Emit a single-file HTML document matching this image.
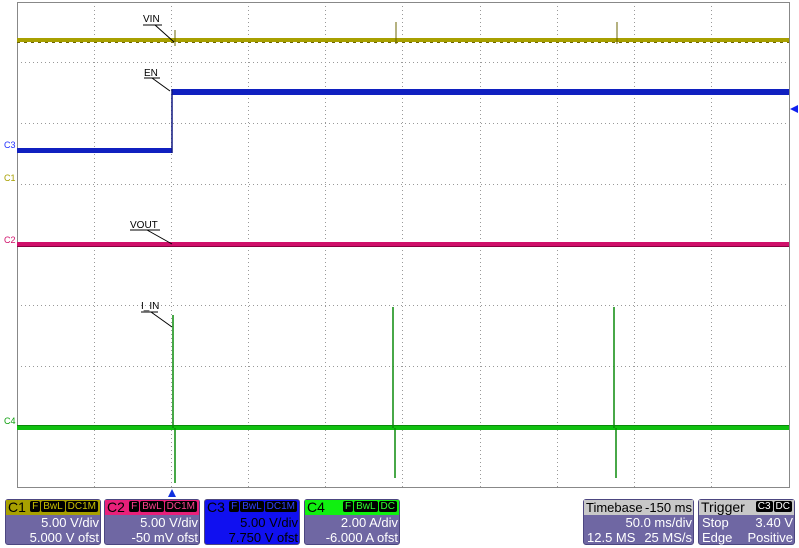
<!DOCTYPE html>
<html><head><meta charset="utf-8"><style>
body{margin:0;background:#fff;width:799px;height:548px;overflow:hidden;font-family:"Liberation Sans",sans-serif}
svg{position:absolute;left:0;top:0}
.box{position:absolute;top:499px;height:46px;background:#6f67a3;border-radius:3px;color:#fff;font-size:13px;box-sizing:border-box;border:1px solid #4c4680}
.hd{height:15px;line-height:15px;padding-left:2px;font-size:14px;color:#000;position:relative}
.tg{position:absolute;right:2px;top:1px;font-size:10px;line-height:12px}
.tg span{background:#000;border-radius:2px;padding:0 2px;margin-left:1px}
.r{text-align:right;padding-right:1px;line-height:15px}
</style></head><body>
<svg width="799" height="548" viewBox="0 0 799 548">
<g stroke="#999" stroke-dasharray="1,3" stroke-width="1">
<line x1="94.5" y1="2" x2="94.5" y2="487"/><line x1="171.5" y1="2" x2="171.5" y2="487"/><line x1="248.5" y1="2" x2="248.5" y2="487"/><line x1="325.5" y1="2" x2="325.5" y2="487"/><line x1="402.5" y1="2" x2="402.5" y2="487"/><line x1="480.5" y1="2" x2="480.5" y2="487"/><line x1="557.5" y1="2" x2="557.5" y2="487"/><line x1="634.5" y1="2" x2="634.5" y2="487"/><line x1="711.5" y1="2" x2="711.5" y2="487"/>
<line x1="17" y1="62.5" x2="789" y2="62.5"/><line x1="17" y1="123.5" x2="789" y2="123.5"/><line x1="17" y1="184.5" x2="789" y2="184.5"/><line x1="17" y1="244.5" x2="789" y2="244.5"/><line x1="17" y1="305.5" x2="789" y2="305.5"/><line x1="17" y1="366.5" x2="789" y2="366.5"/><line x1="17" y1="426.5" x2="789" y2="426.5"/>
</g>
<rect x="17.5" y="2.5" width="772" height="485" fill="none" stroke="#888"/>
<rect x="17" y="38" width="772" height="4" fill="#a8a000"/>
<line x1="17" y1="42.5" x2="789" y2="42.5" stroke="#6b6400" stroke-dasharray="3,4"/>
<line x1="175" y1="30" x2="175" y2="46" stroke="#6b6400"/><line x1="396" y1="22" x2="396" y2="44" stroke="#6b6400"/><line x1="617" y1="22" x2="617" y2="44" stroke="#6b6400"/>
<rect x="17" y="148" width="155" height="5" fill="#1020c0"/>
<rect x="172" y="89" width="617" height="6" fill="#1020c0"/>
<line x1="172" y1="89" x2="172" y2="153" stroke="#101880" stroke-width="1.5"/>
<polygon points="790,109 798,105 798,113" fill="#1020f0"/>
<rect x="17" y="242" width="772" height="5" fill="#d0106a"/>
<line x1="17" y1="246.5" x2="789" y2="246.5" stroke="#8a0040"/>
<rect x="17" y="425" width="772" height="5" fill="#10c010"/>
<line x1="17" y1="425.5" x2="789" y2="425.5" stroke="#0a8a0a"/>
<g stroke="#0a8a0a" stroke-width="1.5">
<line x1="173" y1="315" x2="173" y2="428"/><line x1="175" y1="428" x2="175" y2="483"/>
<line x1="393" y1="307" x2="393" y2="428"/><line x1="395" y1="428" x2="395" y2="478"/>
<line x1="614" y1="307" x2="614" y2="428"/><line x1="616" y1="428" x2="616" y2="478"/>
</g>
<g font-family="Liberation Sans" font-size="10" fill="#000">
<text x="143" y="22">VIN</text><line x1="143" y1="25" x2="162" y2="25" stroke="#000"/><line x1="155" y1="25" x2="174" y2="42" stroke="#000"/>
<text x="144" y="76">EN</text><line x1="144" y1="78" x2="160" y2="78" stroke="#000"/><line x1="152" y1="78" x2="170" y2="91" stroke="#000"/>
<text x="130" y="228">VOUT</text><line x1="130" y1="230" x2="160" y2="230" stroke="#000"/><line x1="147" y1="230" x2="172" y2="244" stroke="#000"/>
<text x="141" y="309">I_IN</text><line x1="141" y1="312" x2="158" y2="312" stroke="#000"/><line x1="151" y1="312" x2="172" y2="327" stroke="#000"/>
</g>
<g font-family="Liberation Sans" font-size="9">
<text x="4" y="148" fill="#2030ff">C3</text><text x="4" y="181" fill="#a8a000">C1</text><text x="4" y="243" fill="#d0106a">C2</text><text x="4" y="424" fill="#10a010">C4</text>
</g>
<polygon points="172,489 168,497 176,497" fill="#1030e0"/>
</svg>
<div class="box" style="left:5px;width:96px"><div class="hd" style="background:#a8a000">C1<div class="tg"><span style="color:#c8c000">F</span><span style="color:#c8c000">BwL</span><span style="color:#c8c000">DC1M</span></div></div><div class="r">5.00 V/div</div><div class="r">5.000 V ofst</div></div>
<div class="box" style="left:104px;width:96px"><div class="hd" style="background:#e8207a">C2<div class="tg"><span style="color:#ff4090">F</span><span style="color:#ff4090">BwL</span><span style="color:#ff4090">DC1M</span></div></div><div class="r">5.00 V/div</div><div class="r">-50 mV ofst</div></div>
<div class="box" style="left:204px;width:96px;background:#1010f0;color:#000"><div class="hd">C3<div class="tg"><span style="color:#3040ff">F</span><span style="color:#3040ff">BwL</span><span style="color:#3040ff">DC1M</span></div></div><div class="r">5.00 V/div</div><div class="r">7.750 V ofst</div></div>
<div class="box" style="left:304px;width:96px"><div class="hd" style="background:#10f010">C4<div class="tg"><span style="color:#30ff30">F</span><span style="color:#30ff30">BwL</span><span style="color:#30ff30">DC</span></div></div><div class="r">2.00 A/div</div><div class="r">-6.000 A ofst</div></div>
<div class="box" style="left:583px;width:111px"><div class="hd" style="background:#c8c8c8;font-size:13px">Timebase<span style="position:absolute;right:1px">-150 ms</span></div><div class="r">50.0 ms/div</div><div class="r" style="padding-left:3px"><span style="float:left">12.5 MS</span>25 MS/s</div></div>
<div class="box" style="left:698px;width:97px"><div class="hd" style="background:#c8c8c8">Trigger<div class="tg"><span style="color:#fff">C3</span><span style="color:#fff">DC</span></div></div><div class="r" style="padding-left:3px"><span style="float:left">Stop</span>3.40 V</div><div class="r" style="padding-left:3px"><span style="float:left">Edge</span>Positive</div></div>
</body></html>
